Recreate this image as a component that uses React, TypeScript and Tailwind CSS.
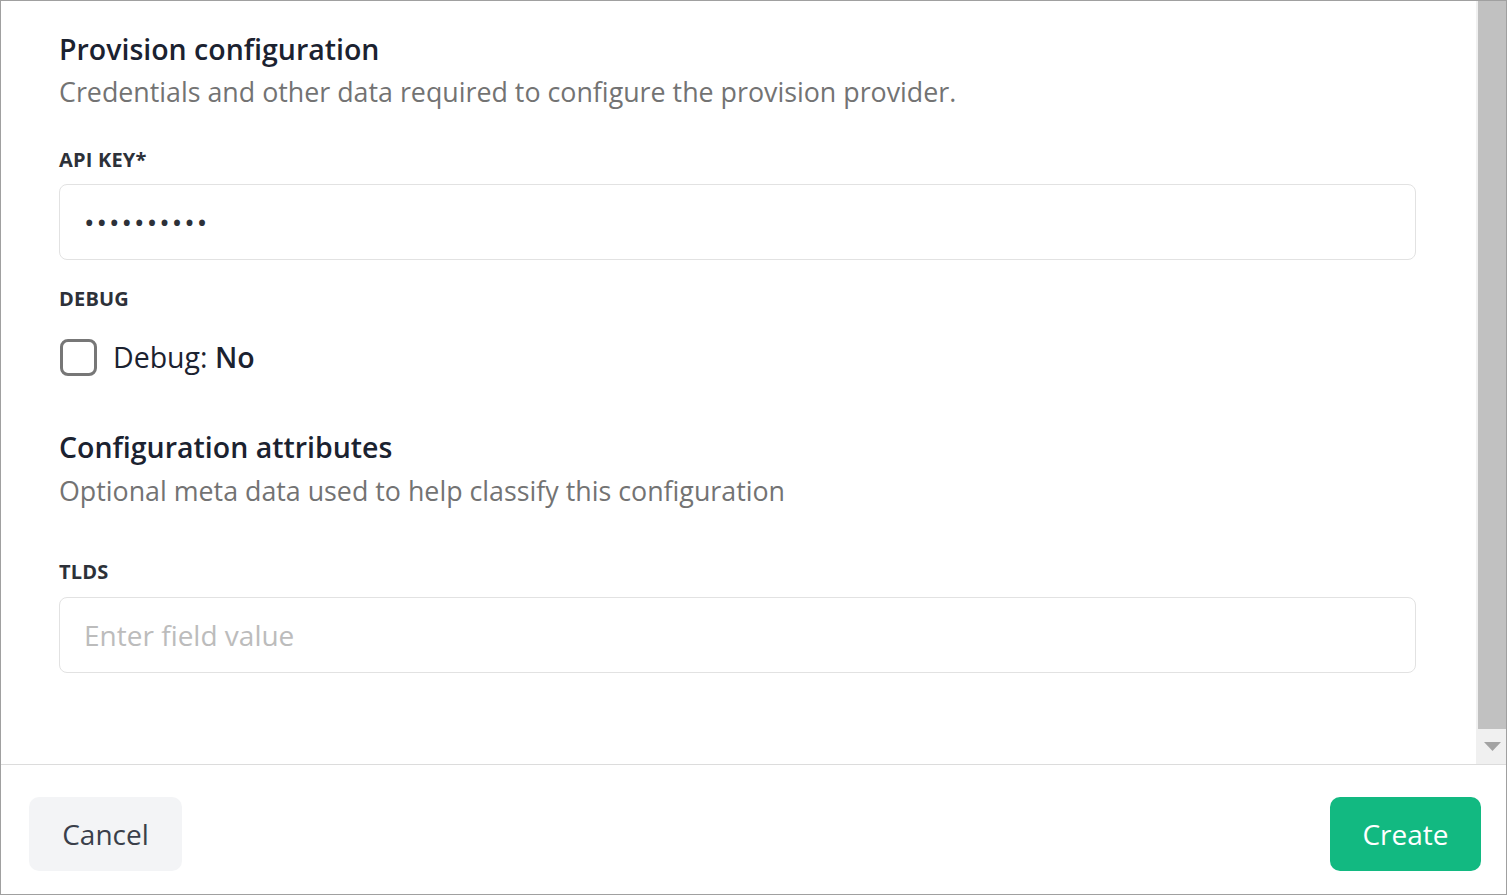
import { useState } from "react";

function Label({ children }: { children: React.ReactNode }) {
  return <div className="text-[20px] leading-[28px] font-bold text-[#2d3139] tracking-[0.2px]">{children}</div>;
}

export default function App() {
  const [debug, setDebug] = useState(false);

  return (
    <div className="h-screen w-full border border-[#a0a0a0] flex flex-col bg-white font-['Open_Sans',sans-serif]">
      <div className="flex flex-1 min-h-0">
        <div className="flex-1 min-w-0 pl-[58px] pr-[60px] pt-[28px]">
          <h2 className="text-[28.5px] leading-[40px] font-semibold text-[#1b2230]">Provision configuration</h2>
          <p className="text-[26.8px] leading-[40px] text-[#737373] mt-[3px]">
            Credentials and other data required to configure the provision provider.
          </p>

          <div className="mt-[34px]">
            <Label>API KEY*</Label>
            <input
              type="password"
              defaultValue="0123456789"
              className="mt-[10px] w-full h-[76px] rounded-[8px] border border-[#e2e2e2] px-[24px] text-[28px] tracking-[2px] text-[#2d3139] outline-none"
            />
          </div>

          <div className="mt-[25px]">
            <Label>DEBUG</Label>
            <label className="mt-[23px] flex items-center gap-[16px] cursor-pointer">
              <input
                type="checkbox"
                checked={debug}
                onChange={(e) => setDebug(e.target.checked)}
                className="appearance-none ml-[1px] w-[37px] h-[37px] rounded-[8px] border-[3px] border-[#777777] bg-white"
              />
              <span className="text-[28.5px] text-[#1b2230]">
                Debug: <span className="font-semibold">{debug ? "Yes" : "No"}</span>
              </span>
            </label>
          </div>

          <h2 className="mt-[48px] text-[28.5px] leading-[40px] font-semibold text-[#1b2230]">Configuration attributes</h2>
          <p className="text-[26.8px] leading-[40px] text-[#737373] mt-[4px]">
            Optional meta data used to help classify this configuration
          </p>

          <div className="mt-[47px]">
            <Label>TLDS</Label>
            <input
              type="text"
              placeholder="Enter field value"
              className="mt-[11px] w-full h-[76px] rounded-[8px] border border-[#e2e2e2] px-[24px] text-[28px] text-[#2d3139] placeholder:text-[#bcbcbc] outline-none"
            />
          </div>
        </div>

        <div className="w-[30px] bg-[#f0f0f0] flex flex-col">
          <div className="flex-1 ml-[2px] bg-[#c1c1c1]" />
          <div className="h-[35px] flex items-center justify-center pl-[2px]">
            <svg width="17" height="9" viewBox="0 0 17 9">
              <path d="M0 0 H17 L8.5 9 Z" fill="#a3a3a3" />
            </svg>
          </div>
        </div>
      </div>

      <div className="h-[130px] border-t border-[#dcdcdc] flex items-start justify-between pl-[28px] pr-[25px] pt-[32px]">
        <button className="h-[74px] w-[153px] rounded-[10px] bg-[#f3f4f6] text-[28px] text-[#3a3f4a]">Cancel</button>
        <button className="h-[74px] w-[151px] rounded-[10px] bg-[#12b981] text-[28px] text-white">Create</button>
      </div>
    </div>
  );
}
